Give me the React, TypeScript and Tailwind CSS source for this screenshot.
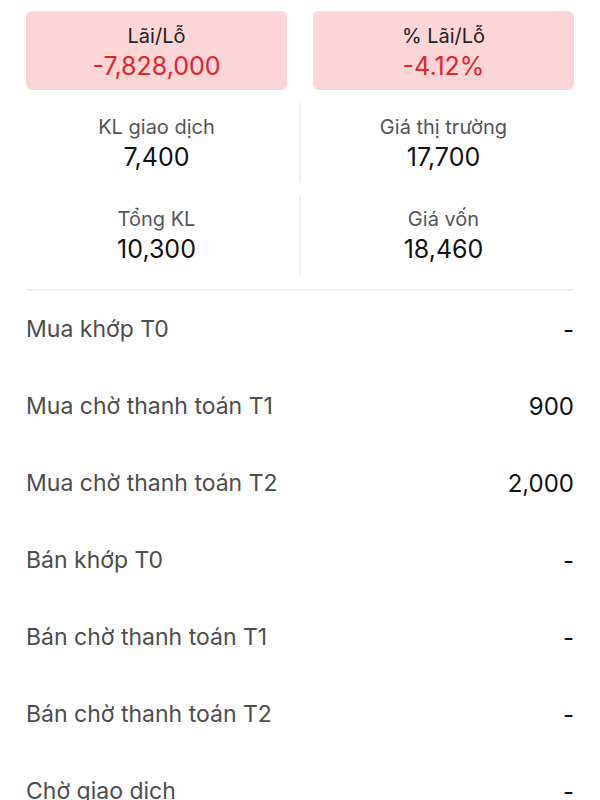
import React from 'react'

const font = { fontFamily: 'Inter, "Noto Sans", sans-serif' }

const stats = [
  [
    { label: 'KL giao dịch', value: '7,400' },
    { label: 'Giá thị trường', value: '17,700' },
  ],
  [
    { label: 'Tổng KL', value: '10,300' },
    { label: 'Giá vốn', value: '18,460' },
  ],
]

const rows = [
  { label: 'Mua khớp T0', value: '-' },
  { label: 'Mua chờ thanh toán T1', value: '900' },
  { label: 'Mua chờ thanh toán T2', value: '2,000' },
  { label: 'Bán khớp T0', value: '-' },
  { label: 'Bán chờ thanh toán T1', value: '-' },
  { label: 'Bán chờ thanh toán T2', value: '-' },
  { label: 'Chờ giao dịch', value: '-' },
]

function PnlCard({ label, value }: { label: string; value: string }) {
  return (
    <div className="h-[79px] rounded-md bg-[#fcd5d7] flex flex-col items-center pt-[11px]">
      <div className="text-[20px] leading-[28px] text-[#222]">{label}</div>
      <div className="text-[25px] leading-[32px] text-[#e3242f]">{value}</div>
    </div>
  )
}

export default function App() {
  return (
    <div className="w-[600px] h-[800px] overflow-hidden bg-white px-[26px]" style={font}>
      {/* lãi lỗ */}
      <div className="grid grid-cols-2 gap-[26px] pt-[11px]">
        <PnlCard label="Lãi/Lỗ" value="-7,828,000" />
        <PnlCard label="% Lãi/Lỗ" value="-4.12%" />
      </div>

      {/* thống kê */}
      <div className="mt-[13px] flex flex-col gap-[12px]">
        {stats.map((pair, i) => (
          <div key={i} className="grid grid-cols-[1fr_2px_1fr] gap-x-[12px] h-[80px]">
            <div className="flex flex-col items-center pt-[11px]">
              <div className="text-[20px] leading-[27px] text-[#555]">{pair[0].label}</div>
              <div className="text-[25px] leading-[32px] text-[#111]">{pair[0].value}</div>
            </div>
            <div className="bg-[#f0f0f0]" />
            <div className="flex flex-col items-center pt-[11px]">
              <div className="text-[20px] leading-[27px] text-[#555]">{pair[1].label}</div>
              <div className="text-[25px] leading-[32px] text-[#111]">{pair[1].value}</div>
            </div>
          </div>
        ))}
      </div>

      <div className="mt-[14px] h-[2px] bg-[#f0f0f0]" />

      {/* chi tiết */}
      <div>
        {rows.map((r) => (
          <div key={r.label} className="h-[77px] flex items-center justify-between">
            <span className="text-[23px] text-[#4d4d4d]">{r.label}</span>
            <span className="text-[24px] text-[#111]">{r.value}</span>
          </div>
        ))}
      </div>
    </div>
  )
}
